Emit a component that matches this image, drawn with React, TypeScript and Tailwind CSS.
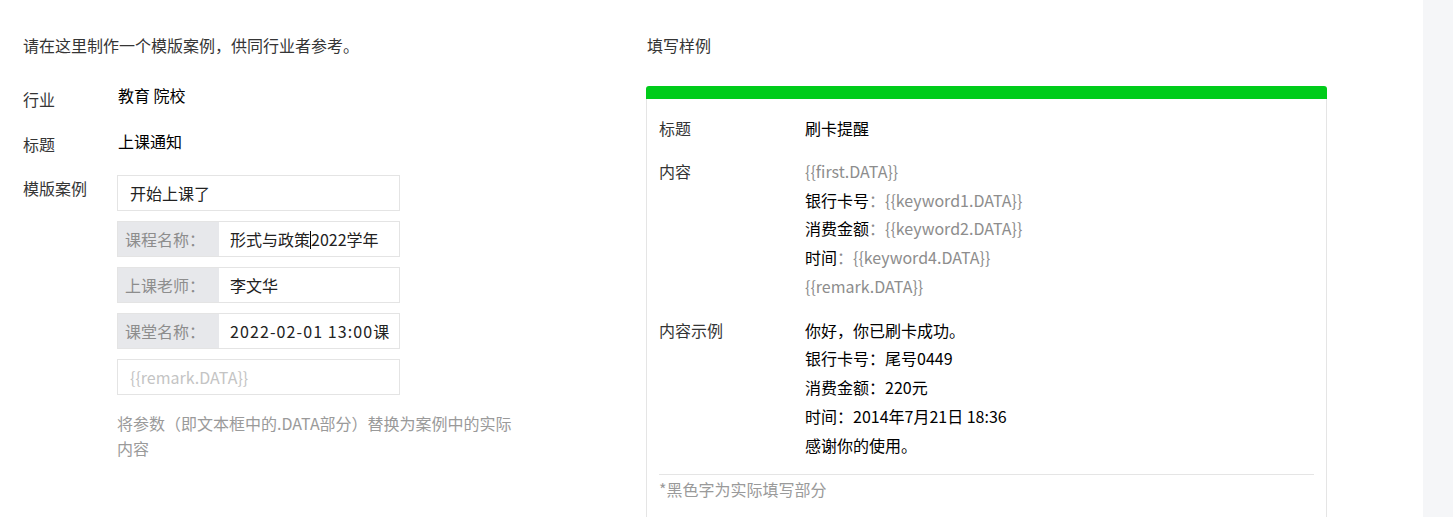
const font = { fontFamily: '"Noto Sans CJK SC", "Noto Sans", sans-serif' };

const fields = [
  { label: "课程名称：", value: "形式与政策", tail: "2022学年", caret: true },
  { label: "上课老师：", value: "李文华" },
  { label: "课堂名称：", value: "2022-02-01 13:00课堂", wide: true },
];

function Placeholder({ children }: { children: React.ReactNode }) {
  return <span className="text-[#8d8d8d]">{children}</span>;
}

export default function App() {
  return (
    <div className="flex h-[517px] w-full overflow-hidden bg-white text-[16px] text-[#353535]" style={font}>
      <div className="flex w-[1423px] shrink-0 pl-[23px] pt-[33px]">
        {/* left: form */}
        <div className="w-[623px] shrink-0">
          <p className="leading-[24px]">请在这里制作一个模版案例，供同行业者参考。</p>

          <div className="mt-[27px] flex items-start">
            <div className="mt-[3px] w-[95px] leading-[24px]">行业</div>
            <div className="-mt-px leading-[24px] text-black">教育 院校</div>
          </div>

          <div className="mt-[18px] flex items-start">
            <div className="mt-[3px] w-[95px] leading-[24px]">标题</div>
            <div className="leading-[24px] text-black">上课通知</div>
          </div>

          <div className="mt-[19px] flex items-start">
            <div className="mt-[1px] w-[94px] leading-[24px]">模版案例</div>
            <div className="flex flex-col gap-[10px]">
              <div className="flex h-[36px] w-[283px] items-center border border-[#e4e4e4] pl-[12px] text-[#222]">
                开始上课了
              </div>
              {fields.map((f) => (
                <div key={f.label} className="flex h-[36px] w-[283px] border border-[#e4e4e4]">
                  <div className="flex w-[101px] shrink-0 items-center bg-[#e7e8eb] pl-[7px] text-[#8d8d8d]">
                    {f.label}
                  </div>
                  <div className="flex min-w-0 flex-1 items-center pl-[11px] pr-[10px] text-[#222]">
                    <div
                      className={f.wide ? "overflow-hidden whitespace-nowrap tracking-[1.1px]" : "overflow-hidden whitespace-nowrap"}
                    >
                      {f.value}
                      {f.caret && <span className="inline-block h-[18px] w-px translate-y-[3px] bg-black" />}
                      {f.tail}
                    </div>
                  </div>
                </div>
              ))}
              <div className="flex h-[36px] w-[283px] items-center border border-[#e4e4e4] pl-[12px] text-[#c4c4c4]">
                {"{{remark.DATA}}"}
              </div>
            </div>
          </div>

          <p className="ml-[94px] mt-[16px] w-[400px] leading-[25px] text-[#9a9a9a]">
            将参数（即文本框中的.DATA部分）替换为案例中的实际内容
          </p>
        </div>

        {/* right: sample card */}
        <div className="w-[681px] shrink-0">
          <p className="pl-px leading-[24px]">填写样例</p>
          <div className="mt-[29px] h-[13px] rounded-t-[3px] bg-[#00cc1a]" />
          <div className="h-[420px] border-x border-[#e5e5e5] px-[12px] pt-[15px]">
            <div className="flex leading-[28.75px]">
              <div className="w-[146px] shrink-0">标题</div>
              <div className="text-black">刷卡提醒</div>
            </div>
            <div className="mt-[14px] flex leading-[28.75px]">
              <div className="w-[146px] shrink-0">内容</div>
              <div className="text-black">
                <div><Placeholder>{"{{first.DATA}}"}</Placeholder></div>
                <div>银行卡号<Placeholder>：{"{{keyword1.DATA}}"}</Placeholder></div>
                <div>消费金额<Placeholder>：{"{{keyword2.DATA}}"}</Placeholder></div>
                <div>时间<Placeholder>：{"{{keyword4.DATA}}"}</Placeholder></div>
                <div><Placeholder>{"{{remark.DATA}}"}</Placeholder></div>
              </div>
            </div>
            <div className="mt-[15px] flex leading-[28.75px]">
              <div className="w-[146px] shrink-0">内容示例</div>
              <div className="text-black">
                <div>你好，你已刷卡成功。</div>
                <div>银行卡号：尾号0449</div>
                <div>消费金额：220元</div>
                <div>时间：2014年7月21日 18:36</div>
                <div>感谢你的使用。</div>
              </div>
            </div>
            <div className="mt-[15px] border-t border-[#e5e5e5] pt-[2px] leading-[24px] text-[#9a9a9a]">
              *黑色字为实际填写部分
            </div>
          </div>
        </div>
      </div>
      <div className="h-[517px] flex-1 bg-[#f5f6f8]" />
    </div>
  );
}
